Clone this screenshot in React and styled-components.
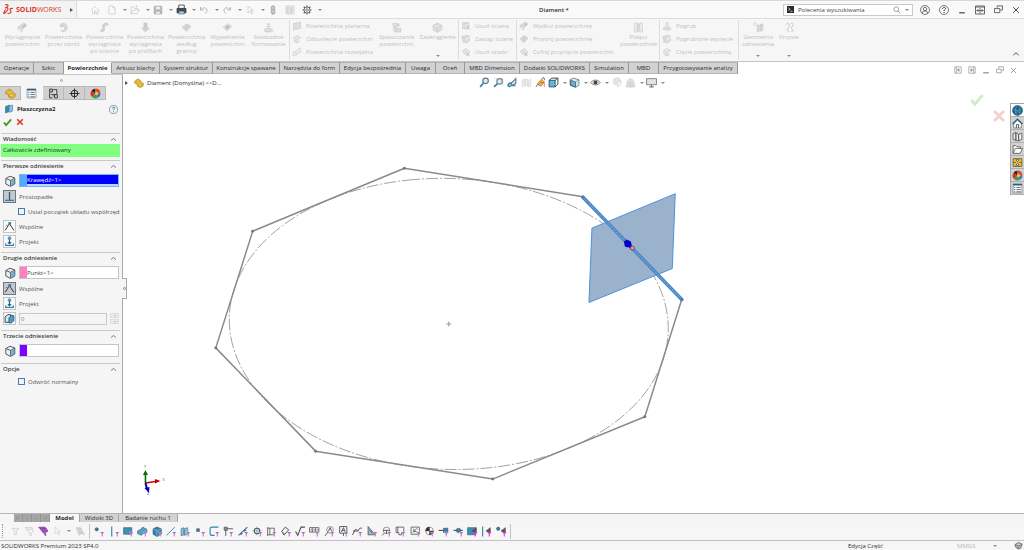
import React from "react";
import styled, { createGlobalStyle } from "styled-components";

const Global = createGlobalStyle`
  *, *::before, *::after { box-sizing: border-box; }
  body { margin: 0; background: #f6f6f6; color: #2b2b2b; font: 6px/8px "Open Sans", "Noto Sans", sans-serif; }
  button, input { font: inherit; color: inherit; margin: 0; padding: 0; border: 0; background: none; }
  button { display: flex; align-items: center; justify-content: center; }
  svg { display: block; flex: none; }
`;

/* ---------- icons (20 x 20 grid) ---------- */
const FILTER = "#a44fc0";
const BLUE = "#2f81ab";
const DARK = "#4c4c4c";

const G = {
  home: <path d="M2 11 10 3l8 8M5 10v8h4v-6h3v6h4v-8" />,
  page: <path d="M4 2h8l4 4v12H4zM12 2v4h4" />,
  open: <path d="M2 17V4h5l2 3h7v3M2 17l4-7h13l-4 7zM13 5V1m-2 2 2-2 2 2" />,
  save: <><path d="M2 2h16v16H2z" fill="currentColor" /><path d="M5 3h10v6H5zM6 13h8v5H6z" fill="#eee" /></>,
  print: <><path d="M5 8V2h10v6" fill="#fff" stroke="#444" strokeWidth="1.600" /><path d="M2 8h16v8H2z" fill="#35506a" stroke="#333" strokeWidth="1.600" /><path d="M5 13h10v5H5z" fill="#a9d4ea" stroke="#444" /></>,
  undo: <path d="M3 4v6h6M3 10c4-6 14-6 13 2-.3 2-2 4-4 5" strokeWidth="2" />,
  redo: <path d="M17 4v6h-6M17 10C13 4 3 4 4 12c.3 2 2 4 4 5" strokeWidth="2" />,
  cursor: <path d="M6 2v14l4-4 3 6 2-1-3-6h5z" />,
  traffic: <><rect x="6" y="1" width="8" height="18" rx="4" fill="currentColor" /><circle cx="10" cy="6" r="2" fill="#e5e5e5" /><circle cx="10" cy="13" r="2" fill="#e5e5e5" /></>,
  list: <><path d="M2 2h16v16H2zM8 2v16" /><path d="M3 6h4M3 10h4M3 14h4M10 6h6M10 10h6M10 14h6" strokeWidth="2" /></>,
  gear: <><circle cx="10" cy="10" r="6" strokeWidth="1.600" /><circle cx="10" cy="10" r="2.500" strokeWidth="1.400" /><path d="M10 1v3M10 16v3M1 10h3M16 10h3M3.500 3.500l2 2M14.500 14.500l2 2M3.500 16.500l2-2M14.500 5.500l2-2" strokeWidth="2.400" /></>,
  search: <><circle cx="8" cy="8" r="6" strokeWidth="1.600" /><path d="m12 12 6 6" strokeWidth="2" /></>,
  terminal: <><path d="M0 0h20v20H0z" fill="#2b2b2b" stroke="none" /><path d="m4 5 5 4-5 4M10 15h6" stroke="#fff" strokeWidth="2" /></>,
  user: <><circle cx="10" cy="10" r="9" strokeWidth="1.400" /><circle cx="10" cy="8" r="3.500" strokeWidth="1.400" /><path d="M5 17v-3l3-2h4l3 2v3" strokeWidth="1.400" /></>,
  help: <><circle cx="10" cy="10" r="9" strokeWidth="1.400" /><path d="M7 8c0-4 6-4 6-1 0 2-3 2-3 5M10 14v2" strokeWidth="2" /></>,
  min: <path d="M3 17h14" strokeWidth="3" />,
  grid: <><path d="M1 2h18v16H1zM1 4h18" strokeWidth="1.600" /><path d="M10 6v12M3 11h14M7 8l-3 3 3 3M13 8l3 3-3 3" strokeWidth="1.400" /></>,
  restore: <><path d="M7 6V2h12v9h-5" strokeWidth="1.800" /><path d="M1 8h12v9H1z" strokeWidth="1.800" /></>,
  close: <path d="m3 3 14 14M17 3 3 17" strokeWidth="2.400" />,
  up: <path d="m3 13 7-6 7 6" strokeWidth="2.200" />,
  dockL: <><path d="M2 2h16v16H2zM6 2v16" strokeWidth="1.600" /><path d="m13 6-5 4 5 4z" fill="currentColor" /></>,
  dockR: <><path d="M2 2h16v16H2zM14 2v16" strokeWidth="1.600" /><path d="m7 6 5 4-5 4z" fill="currentColor" /></>,
  extrude: <><path d="m2 9 10-7 6 4-9 8z" fill="#dcdcdc" /><path d="m2 9 7 5v4l-7-4zM12 5l3-3" /><path d="m10 10 6-5" strokeWidth="3" /></>,
  revolve: <path d="M4 5c5-5 13-2 13 5s-8 9-12 6c5 0 8-2 7-6-1-3-5-3-7-1L4 5zM5 9l5-1" fill="#d8d8d8" />,
  sweep: <path d="M4 18c4 0 7-2 6-6s0-6 7-7l-2-3c-8 0-10 4-8 9 1 3-1 3-4 3z" fill="#d2d2d2" />,
  loft: <path d="M7 2h6v9h4l-7 7-7-7h4zM10 3v9" fill="#d2d2d2" />,
  bound: <path d="m2 10 8-7 8 5-8 9zM5 8l8 6M8 5l8 6M6 14l8-9" fill="#dadada" />,
  fill: <><path d="m2 9 9-6 7 5-9 8z" fill="#e4e4e4" /><path d="m6 9 5-3 3 3-5 4z" fill="#bbb" /></>,
  free: <><path d="M2 16c1-6 15-6 16 0-4 3-12 3-16 0zM10 11V2M7 5l3-3 3 3" fill="#ddd" /><path d="M6 8h8" /></>,
  planar: <path d="m3 5 14-3v13L3 18z" fill="#dedede" />,
  offset: <path d="m2 8 8-5 8 4-8 5zM2 12l8 4 6-3M5 14c0 3 5 4 9 3" fill="#e6e6e6" />,
  ruled: <path d="m2 10 6-2v8l-6 2zM8 8c3 0 2-6 9-6v9c-5 0-5 4-9 5" fill="#ececec" />,
  flatten: <path d="M2 3h12v5H8v4h10v6H6M4 8l10 7M3 13l6 4M9 3l7 3" fill="#e0e0e0" />,
  fillet: <path d="m2 6 8-4 8 4v8l-8 5-8-5zM2 6l8 4 8-4M10 10v8M6 4l8 4" fill="#e0e0e0" />,
  del: <><path d="M3 3h12v12H3zM6 6l9-2M6 6v10" fill="#e8e8e8" /><path d="m10 9 7 8M17 9l-7 8" strokeWidth="2" /></>,
  repl: <path d="m2 5 10-3 6 3-10 4zM2 5v5l6 3V9M4 12l-1 4 8 2 6-4V9l-7 4" fill="#e0e0e0" />,
  hole: <><path d="m2 9 8-6 8 6-8 7z" fill="#eee" /><circle cx="9" cy="9" r="3" /><path d="m11 11 6 7M17 11l-6 7" strokeWidth="2" /></>,
  knit: <path d="M3 2h5v16H3zM12 2h5v16h-5zM8 5h4M8 9h4M8 13h4M9 2c1 5-1 8 1 16" fill="#ededed" />,
  refg: <><circle cx="4" cy="4" r="2.500" /><path d="m8 6 3-1v12l-3 1zM13 5l5-2v12l-5 2z" fill="#ddd" /><path d="M15 4v12" /></>,
  curve: <path d="M3 5c5-5 9 0 6 4s-5 8 0 8M12 3c5-2 6 2 3 5s-1 5 1 6-1 4-3 3" strokeWidth="1.600" />,
  part: <><path d="m1 7 6-5 5 2 2 4 5 3-1 5-5 3-6-2-1-5-5-2z" fill="#eebd32" stroke="#a9790f" strokeWidth="1.200" /><path d="m6 6 4 1 1 4 4 2-2 3-4-1 1-4-5-2z" fill="#ffe38a" stroke="#b98718" /></>,
  pm: <><path d="M2 2h16v16H2z" fill="#fff" stroke="#44657e" /><path d="M2 3h16" stroke="#305c80" strokeWidth="3" /><path d="M8 8h8M8 12h8M8 16h8" strokeWidth="1.600" stroke="#555" /><path d="M4 8h2M4 12h2M4 16h2" strokeWidth="2" stroke={BLUE} /></>,
  config: <><path d="M3 2h5v5H3zM3 8v10h5M6 12h5v4" strokeWidth="1.600" /><path d="M10 3h6v7l-3 2M12 12h5v6h-5z" fill="#ddd" strokeWidth="1.600" /></>,
  target: <><circle cx="10" cy="10" r="6" strokeWidth="1.800" /><path d="M10 1v18M1 10h18" strokeWidth="1.800" /></>,
  ball: <g stroke="none"><circle cx="10" cy="10" r="9" fill="#eee" /><path d="M10 10V1a9 9 0 0 0-8 5z" fill="#2b2b2b" /><path d="M10 10 2 6a9 9 0 0 0 2 11z" fill="#d93025" /><path d="m10 10-6 7a9 9 0 0 0 10 1z" fill="#39a14a" /><path d="m10 10 4 8a9 9 0 0 0 5-9z" fill="#3576c7" /><path d="m10 10 9-1a9 9 0 0 0-9-8z" fill="#e8462f" /><circle cx="12" cy="10" r="3" fill="#f4c430" /></g>,
  plane: <><path d="m3 5 8-3v13l-8 3z" fill="#3b86b4" stroke="#245a7d" /><path d="m11 4 6-2v12l-6 3" fill="#8ec0dc" stroke="#2a6286" /></>,
  check: <path d="m2 10 5 6L18 3" strokeWidth="4" />,
  cross: <path d="m3 3 14 14M17 3 3 17" strokeWidth="4" />,
  box: <><path d="m3 6 7-4 8 3v10l-7 4-8-4z" fill="#e9f1f5" stroke="#555" strokeWidth="1.600" /><path d="m3 6 8 3 7-4M11 9v9" stroke="#555" strokeWidth="1.600" /><path d="m13 10 4-2v7l-4 2z" fill="#7fbfdc" stroke={BLUE} /></>,
  perp: <><path d="M2 17h16" stroke={BLUE} strokeWidth="2.400" /><path d="M10 2v14" stroke="#255f82" strokeWidth="2.400" /></>,
  coin: <><path d="m2 17 8-12 8 12" stroke="#333" strokeWidth="1.800" /><path d="M3 8h6" stroke="#777" strokeWidth="1.400" /><path d="M8 4h5" stroke={BLUE} strokeWidth="4" /></>,
  proj: <><circle cx="10" cy="4" r="2.500" fill="#6cb4d6" stroke={BLUE} strokeWidth="1.600" /><path d="M10 6v8m-3-3 3 3 3-3" stroke="#285d80" strokeWidth="2" /><path d="M3 13v4h14v-4" stroke={BLUE} strokeWidth="2" /></>,
  dist: <><path d="M2 7 7 3h5v11l-4 3H2z" fill="#d9e9f1" stroke="#333" strokeWidth="1.600" /><path d="m9 9 5-5 4 1v9l-5 4H9z" fill="#4c9cc4" stroke="#24597b" strokeWidth="1.600" /></>,
  zoomFit: <><circle cx="12" cy="7" r="5" fill="#dcecf4" stroke="#5b7686" strokeWidth="2" /><path d="m8 11-6 7" stroke={BLUE} strokeWidth="3" /></>,
  zoomArea: <><path d="M2 3h16v13" stroke="#999" strokeDasharray="2 2" /><circle cx="12" cy="8" r="5" fill="#dcecf4" stroke="#6f8490" strokeWidth="2" /><path d="m8 12-6 6" stroke={BLUE} strokeWidth="3" /></>,
  prev: <><path d="m8 11 8-8v9l-9 4zM16 16H7" stroke="#55788a" strokeWidth="2" fill="#e5edf1" /><path d="M9 11c-8-1-9 7-3 6" stroke={BLUE} strokeWidth="3" /></>,
  section: <path d="m2 6 5-2v12l-5 2zM8 4h4v12H8zM13 6l5-2v12l-5 2z" stroke="#cfcfcf" fill="#eee" />,
  edit: <><path d="m4 12 8-8 5 5-6 8z" fill="#f0b13c" stroke="#8d6a3a" /><path d="M2 18c1-5 4-6 7-2M12 3l4-2 2 5" fill="#dfe5e8" stroke="#58707e" strokeWidth="1.600" /><path d="M9 10h8v8" stroke="#c0392b" /></>,
  views: <><path d="M2 6h11v12H2z" fill="#66b4d8" stroke="#25506b" strokeWidth="1.600" /><path d="m2 6 5-4h11v11l-5 5M13 6l5-4" stroke="#333" strokeWidth="1.600" /></>,
  cube: <><path d="m2 5 6-3 10 3v10l-6 4-10-4z" fill="#dceef6" stroke="#586f7c" strokeWidth="1.400" /><path d="M3 6l9 3v9l-9-3z" fill="#65b3d8" /><path d="m12 9 6-4" stroke="#586f7c" /></>,
  eye: <><path d="M1 10c4-6 14-6 18 0-4 6-14 6-18 0z" fill="#ddd" stroke="#777" strokeWidth="1.400" /><circle cx="10" cy="10" r="3.500" fill="#444" stroke="none" /></>,
  appear: <><circle cx="9" cy="8" r="6.500" fill="#e6e6e6" stroke="#ccc" /><path d="m9 9 8-2-2 8-5 3z" fill="#f3f3f3" stroke="#ccc" /></>,
  scene: <><path d="M2 18c1-9 3-15 8-15s7 6 8 15z" fill="#e4e4e4" stroke="#c4c4c4" /><path d="M6 10h8v8H6zM10 6v12M6 14h8" stroke="#c4c4c4" /></>,
  monitor: <><path d="M1 3h18v11H1z" fill="#e4e4e4" stroke="#777" strokeWidth="1.600" /><path d="M10 14v4M6 18h8" stroke="#777" strokeWidth="2" /></>,
  globe: <><circle cx="10" cy="10" r="9" fill="#1b6288" stroke="#0f4564" /><path d="M3 8c5 3 9 3 14 0M5 14c3-2 7-2 10 0M8 2c-2 5-2 11 0 16M13 2c2 5 2 11 0 16" stroke="#74b5d6" /></>,
  homeB: <><path d="M3 10v8h14v-8l-7-6z" fill="#fff" stroke="#444" /><path d="m1 11 9-9 9 9" stroke="#245f85" strokeWidth="2.400" /><path d="M8 18v-6h4v6" stroke="#444" strokeWidth="1.600" /></>,
  lib: <path d="m2 5 5-2v14l-5-2zM7 3l5 3v12l-5-1zM12 6l6-2v11l-6 3z" fill="#eee" stroke="#555" strokeWidth="1.500" />,
  folder: <path d="M2 17V3h5l2 2h6v3M2 17l4-9h13l-4 9z" fill="#fff" stroke="#555" strokeWidth="1.500" />,
  palette: <><path d="M2 3h16v14H2z" fill="#f0c03a" stroke="#6b5624" strokeWidth="1.500" /><path d="M7 5h6l-3 4zM7 15h6l-3-4zM2 10h5M13 10h5" fill="#fff" stroke="#555" strokeWidth="1.500" /></>,
};

const Glyph = styled.svg.attrs({ viewBox: "0 0 20 20", fill: "none", stroke: "currentColor", "aria-hidden": true })`
  width: ${(p) => p.$s || 10}px;
  height: ${(p) => p.$s || 10}px;
  color: ${(p) => p.$c || "inherit"};
`;
const Icon = ({ n, s, c }) => <Glyph $s={s} $c={c}>{G[n]}</Glyph>;

const Caret = styled.span`
  display: block;
  width: 0;
  height: 0;
  border: 2px solid transparent;
  border-top-color: ${(p) => p.$c || "#8a8a8a"};
  border-bottom: 0;
`;

/* ---------- title bar ---------- */
const Page = styled.div`
  min-height: 100vh;
  display: flex;
  flex-direction: column;
`;
const TitleBar = styled.header`
  display: flex;
  align-items: center;
  height: 19px;
  padding-right: 4px;
  background: #f9f9f9;
  border-top: 1px solid #d8d8d8;
  border-bottom: 1px solid #dcdcdc;
`;
const Brand = styled.div`
  display: flex;
  align-items: center;
  gap: 2px;
  width: 77px;
  height: 100%;
  padding-left: 3px;
  background: #f3f3f3;
  border-right: 1px solid #dcdcdc;
  color: #d9352b;
  font-size: 7px;
`;
const Expand = styled.span`
  margin-left: auto;
  margin-right: 3px;
  border: 2px solid transparent;
  border-left: 3px solid #555;
  border-right: 0;
`;
const QuickBar = styled.nav`
  display: flex;
  align-items: center;
  padding-left: 13px;
  color: #b4b4b4;
`;
const QuickButton = styled.button`
  width: ${(p) => (p.$menu ? 23 : 17)}px;
  justify-content: ${(p) => (p.$menu ? "space-between" : "flex-start")};
  padding-right: ${(p) => (p.$menu ? 3 : 0)}px;
  color: ${(p) => p.$c || "inherit"};
`;
const DocTitle = styled.h1`
  flex: 1;
  margin: 0;
  text-align: center;
  font-size: 6px;
  font-weight: 600;
`;
const Search = styled.label`
  display: flex;
  align-items: center;
  gap: 4px;
  width: 130px;
  height: 12px;
  padding: 0 3px;
  background: #fff;
  border: 1px solid #c9c9c9;
  color: #777;
`;
const SearchInput = styled.input`
  flex: 1;
  min-width: 0;
  outline: 0;
  &::placeholder { color: #444; opacity: 1; }
`;
const WindowButtons = styled.div`
  display: flex;
  align-items: center;
  gap: 9px;
  padding-left: 7px;
  color: #444;
`;

/* ---------- ribbon ---------- */
const Ribbon = styled.div`
  display: flex;
  height: 43px;
  background: #f6f6f6;
  color: #c0c0c0;
  border-bottom: 1px solid #c4c4c4;
`;
const RibbonGroup = styled.div`
  display: flex;
  padding: 2px 0 0 ${(p) => p.$pad || 0}px;
  height: 40px;
  margin-top: 1px;
  border-right: ${(p) => (p.$last ? 0 : 1)}px solid #dddddd;
`;
const BigButton = styled.button`
  width: ${(p) => p.$w || 41}px;
  height: 35px;
  flex-direction: column;
  justify-content: flex-start;
  gap: 1px;
  line-height: 7px;
  text-align: center;
  white-space: pre-line;
`;
const BigCaret = styled(Caret)`
  margin-top: auto;
`;
const SmallColumn = styled.div`
  display: flex;
  flex-direction: column;
  width: ${(p) => p.$w}px;
  padding-left: 2px;
`;
const SmallButton = styled.button`
  height: 14px;
  margin-top: -2px;
  margin-bottom: 2px;
  justify-content: flex-start;
  gap: 4px;
  white-space: nowrap;
`;
const Collapse = styled.button`
  margin-left: auto;
  padding: 0 4px 3px 0;
  align-items: flex-end;
  color: #444;
`;

const TabRow = styled.div`
  display: flex;
  align-items: stretch;
  height: 12px;
  background: #fff;
`;
const Tab = styled.button`
  width: ${(p) => p.$w}px;
  flex: none;
  background: ${(p) => (p.$on ? "#fbfbfb" : "#d2d2d2")};
  border-right: 1px solid #979797;
  border-top: 1px solid ${(p) => (p.$on ? "#fbfbfb" : "#b5b5b5")};
  border-bottom: 1px solid ${(p) => (p.$on ? "#fbfbfb" : "#b5b5b5")};
  font-weight: ${(p) => (p.$on ? 700 : 400)};
  white-space: nowrap;
`;
const DocButtons = styled.div`
  margin-left: auto;
  display: flex;
  gap: 6px;
  padding: 4px 7px 0 0;
  color: #8c8c8c;
`;

/* ---------- work area ---------- */
const Work = styled.main`
  flex: 1;
  display: flex;
  min-height: 439px;
  background: #fff;
`;
const Panel = styled.aside`
  position: relative;
  flex: none;
  width: 123px;
  background: #f5f5f5;
  border-right: 1px solid #a8a8a8;
  border-top: 1px solid #c8c8c8;
`;
const Grip = styled.div`
  height: 11px;
  display: flex;
  align-items: center;
  justify-content: center;
  &::after { content: ""; width: 3px; height: 3px; border: 1px solid #999; border-radius: 50%; }
`;
const PanelTabs = styled.div`
  display: flex;
  height: 14px;
`;
const PanelTab = styled.button`
  width: ${(p) => (p.$on ? 22 : 21)}px;
  background: ${(p) => (p.$on ? "#f5f5f5" : "#d0d0d0")};
  border: 1px solid ${(p) => (p.$on ? "#f5f5f5" : "#b9b9b9")};
  border-left-width: 0;
`;
const PanelTitle = styled.h2`
  display: flex;
  align-items: center;
  gap: 3px;
  height: 18px;
  margin: 0;
  padding: 0 4px;
  font-size: 6px;
  font-weight: 700;
`;
const HelpButton = styled.button`
  margin-left: auto;
  color: #46708a;
`;
const Actions = styled.div`
  display: flex;
  align-items: flex-start;
  gap: 4px;
  height: 15px;
  padding: 0 3px;
`;
const SectionBox = styled.section`
  margin: 0 2px 0 1px;
  padding-bottom: ${(p) => (p.$tight ? 3 : 4)}px;
  border-top: 1px solid #c9c9c9;
`;
const SectionTitle = styled.h3`
  display: flex;
  align-items: center;
  justify-content: space-between;
  height: 10px;
  margin: 0;
  padding: 0 3px 0 2px;
  font-size: 6px;
  font-weight: 600;
  color: #3c3c3c;
`;
const Message = styled.p`
  margin: 0;
  height: 13px;
  padding-left: 2px;
  background: #80ff80;
  line-height: 13px;
`;
const Row = styled.div`
  display: flex;
  align-items: ${(p) => (p.$tall ? "flex-end" : "center")};
  gap: 3px;
  height: ${(p) => (p.$tall ? 18 : 15)}px;
  padding: 0 1px ${(p) => (p.$tall ? 2 : 0)}px ${(p) => p.$indent || 2}px;
  color: #555;
  overflow: hidden;
  white-space: nowrap;
`;
const FieldIcon = styled.span`
  width: 13px;
  display: flex;
  justify-content: center;
`;
const Field = styled.div`
  display: flex;
  flex: 1;
  height: 13px;
  background: ${(p) => (p.$active ? "#b7dcff" : "#fff")};
  border: 1px solid ${(p) => (p.$active ? "#7fb4e6" : "#c2c6c9")};
`;
const Swatch = styled.span`
  width: 7px;
  background: ${(p) => p.$c};
`;
const FieldInput = styled.input`
  flex: 1;
  min-width: 0;
  height: ${(p) => (p.$active ? 9 : 11)}px;
  outline: 0;
  color: ${(p) => (p.$active ? "#fff" : "#3c3c3c")};
  background: ${(p) => (p.$active ? "#0000ff" : "#fff")};
`;
const RefButton = styled.button`
  width: 13px;
  height: 13px;
  background: ${(p) => (p.$on ? "#c5c9cc" : "#fafafa")};
  border: 1px solid ${(p) => (p.$on ? "#6c7881" : "#c4c4c4")};
`;
const Check = styled.input.attrs({ type: "checkbox" })`
  appearance: none;
  flex: none;
  width: 7px;
  height: 7px;
  background: #eef4f9;
  border: 1px solid #4a7daa;
`;
const CheckLabel = styled.label`
  display: flex;
  align-items: center;
  gap: 3px;
`;
const Spinner = styled.input`
  flex: 1;
  min-width: 0;
  height: 12px;
  padding-left: 1px;
  background: #f5f5f5;
  border: 1px solid #c9c9c9;
  color: #777;
`;
const Steps = styled.span`
  display: flex;
  flex-direction: column;
  gap: 1px;
`;
const Step = styled.button`
  width: 9px;
  height: 5px;
  background: #eeede6;
  border: 1px solid #deddd5;
  color: #aaa;
`;
const PanelHandle = styled.span`
  position: absolute;
  top: 203px;
  right: -5px;
  width: 5px;
  height: 21px;
  display: flex;
  align-items: center;
  justify-content: center;
  background: #f5f5f5;
  border: 1px solid #a8a8a8;
  border-left: 0;
  &::after { content: ""; width: 3px; height: 3px; border: 1px solid #888; border-radius: 50%; }
`;

const Viewport = styled.div`
  position: relative;
  flex: 1;
  min-width: 0;
`;
const Drawing = styled.svg`
  position: absolute;
  inset: 0;
  width: 100%;
  height: 100%;
`;
const ViewBar = styled.div`
  position: relative;
  display: grid;
  grid-template-columns: 1fr auto 1fr;
  align-items: center;
  padding: 3px 4px 0 2px;
`;
const Tree = styled.div`
  display: flex;
  align-items: center;
  gap: 3px;
`;
const TreeArrow = styled(Expand)`
  margin: 0 3px 0 0;
`;
const ViewTools = styled.div`
  display: flex;
  gap: 3px;
  padding-left: 12px;
`;
const ViewTool = styled.button`
  gap: 4px;
  width: ${(p) => (p.$menu ? 18 : 11)}px;
`;
const Confirm = styled.div`
  position: relative;
  display: flex;
  justify-content: flex-end;
  align-items: flex-start;
  gap: 8px;
  padding: 5px 4px 0 0;
`;
const ConfirmButton = styled.button`
  opacity: 0.25;
  margin-top: ${(p) => (p.$low ? 16 : 0)}px;
`;
const TaskPane = styled.nav`
  flex: none;
  align-self: flex-start;
  width: 14px;
  margin-top: 29px;
  border: 1px solid #a4a4a4;
  border-right: 0;
  border-bottom: 0;
`;
const TaskButton = styled.button`
  width: 13px;
  height: 13px;
  background: ${(p) => (p.$on ? "#fff" : "#d2d2d2")};
  border-bottom: 1px solid #b0b0b0;
`;

/* ---------- bottom ---------- */
const ModelTabs = styled.div`
  display: flex;
  height: 9px;
  padding-left: 14px;
  background: #f5f5f5;
  border-top: 1px solid #b4b4b4;
`;
const ScrollButtons = styled.div`
  display: flex;
  background: #a6a6a6;
`;
const ScrollButton = styled.button`
  width: 9px;
  color: #888;
  border-right: 1px solid #929292;
`;
const ModelTab = styled.button`
  width: ${(p) => p.$w}px;
  background: ${(p) => (p.$on ? "#f8f8f8" : "#d2d2d2")};
  border-right: 1px solid #a6a6a6;
  font-weight: ${(p) => (p.$on ? 700 : 400)};
`;
const FilterBar = styled.div`
  display: flex;
  align-items: center;
  height: 18px;
  padding-left: 2px;
  background: #f6f6f6;
`;
const Handle = styled.span`
  height: 14px;
  border-left: 1px dotted #999;
  margin-right: 5px;
`;
const FilterButton = styled.button`
  width: ${(p) => p.$w || 14}px;
  margin-right: ${(p) => (p.$gap ? 1 : 0)}px;
`;
const Divider = styled.span`
  width: 1px;
  height: 15px;
  margin: 0 2px;
  background: #c4c4c4;
`;
const Status = styled.footer`
  display: flex;
  align-items: center;
  height: 10px;
  padding: 0 1px;
  background: #f6f6f6;
  border-top: 1px solid #c2c2c2;
`;
const Mode = styled.span`
  margin-left: auto;
  width: 109px;
`;
const Units = styled.span`
  display: flex;
  align-items: center;
  justify-content: space-between;
  width: 66px;
  color: #b8b8b8;
`;

/* ---------- data ---------- */
const quick = [
  ["home", "Start", 0], ["page", "Nowy", 1], ["open", "Otwórz", 1], ["save", "Zapisz", 1], ["print", "Drukuj", 1],
  ["undo", "Cofnij", 1], ["redo", "Ponów", 1], ["cursor", "Wybierz", 1], ["traffic", "Przebuduj", 0],
  ["list", "Właściwości pliku", 0], ["gear", "Opcje", 1, "#555"],
];
const bigs = [
  ["extrude", "Wyciągnięcie\npowierzchni"], ["revolve", "Powierzchnia\nprzez obrót"], ["sweep", "Powierzchnia\nwyciągnięta\npo ścieżce"],
  ["loft", "Powierzchnia\nwyciągnięta\npo profilach"], ["bound", "Powierzchnia\nwedług\ngranicy"], ["fill", "Wypełnienie\npowierzchni"], ["free", "Swobodne\nformowanie"],
];
const tabs = [
  ["Operacje", 34], ["Szkic", 30], ["Powierzchnie", 48, 1], ["Arkusz blachy", 48], ["System struktur", 53], ["Konstrukcje spawane", 67],
  ["Narzędzia do form", 60], ["Edycja bezpośrednia", 66], ["Uwaga", 30], ["Oceń", 29], ["MBD Dimension", 55], ["Dodatki SOLIDWORKS", 70],
  ["Simulation", 39], ["MBD", 30], ["Przygotowywanie analizy", 79],
];
const filters = [
  ["wierzchołki", <circle cx="5" cy="6" r="3" fill={BLUE} />],
  ["krawędzie", <path d="M5 1v18" stroke={BLUE} strokeWidth="2" />],
  ["ściany", <path d="M1 3h15v12H1z" fill="#3c8fb8" stroke="#24566f" />],
  ["powierzchnie", <path d="m1 9 6-3 3-4 8 4v6l-6 1-4 4-7-3z" fill="#55a2c6" stroke="#285a74" />],
  ["bryły", <><path d="m2 5 7-3 8 3v10l-8 4-7-4z" fill="#3581a8" stroke="#204b62" /><path d="m2 5 7 4 8-4M9 9v9" stroke="#b0dcf0" /></>],
  ["osie", <path d="M1 17 16 2" stroke={BLUE} strokeWidth="1.600" />],
  ["płaszczyzny", <path d="m2 5 5-2v13l-5 2zM8 5l6-2v12l-6 2z" fill="#8cc0d9" stroke="#315d74" />],
  ["punkty szkicu", <path d="M3 5h5v5H3z" fill={BLUE} />],
  ["szkice", <path d="M17 2H5Q2 2 2 5v9q0 3 3 3h5" stroke={BLUE} strokeWidth="2" />],
  ["segmenty szkicu", <><path d="M5 5h13M5 5v13" strokeWidth="1.600" /><path d="M2 2h6v6H2z" fill="#888" /></>],
  ["linie środkowe", <path d="M1 17 17 2M5 16l3-3M11 10l4-3" stroke="#426f87" strokeWidth="2" />],
  ["znaczniki środka", <><circle cx="9" cy="9" r="5" strokeWidth="2" /><path d="M9 1v16M1 9h16" stroke={BLUE} /></>],
  ["wymiary", <path d="M3 2v16M3 4h12v12H3M7 4v12" strokeWidth="1.400" />],
  ["odniesienia", <path d="m1 10 7-8 6 5-7 8zM3 13l3 4" strokeWidth="1.800" />],
  ["wykończenie", <path d="m1 10 4 7L11 2h7" strokeWidth="2" />],
  ["tolerancje", <path d="M1 3h17v8H1zM6 3v8M12 3v8M3 7h2M8 7h3M14 7h3" strokeWidth="1.400" />],
  ["uwagi", <><circle cx="11" cy="7" r="6" /><path d="m2 18 5-7M8 10l3-7 3 7" strokeWidth="1.600" /></>],
  ["bazy", <path d="M3 1h13v12H3zM10 13v5M6 11l4-8 3 8M7 8h5" strokeWidth="1.600" />],
  ["spoiny", <path d="m1 16 4-8c3-5 5 3 7-1s4-3 6-3M2 9h10" strokeWidth="1.800" />],
  ["bloki", <path d="M2 1v15h13zM5 8l5 5" fill="#9cbccb" strokeWidth="1.400" />],
  ["cele bazy", <><circle cx="10" cy="8" r="6" /><path d="M4 8h12M10 8v6M2 17l4-4" strokeWidth="1.600" /></>],
  ["gwinty", <path d="M2 2h14v10h-4v4H7v-4H2zM5 2v10" strokeWidth="1.400" />],
  ["balony", <path d="M2 2h15v13H2zM5 12l8-8M7 5v5h5" strokeWidth="1.400" />],
  ["środki masy", <><circle cx="10" cy="9" r="7" fill="#fff" /><path d="M10 9V2a7 7 0 0 0-7 7zM10 9v7a7 7 0 0 0 7-7z" fill="#333" /></>],
  ["punkty połączeń", <><path d="M1 8h9" strokeWidth="2" /><path d="M10 4h8v8h-8z" fill={BLUE} /></>],
  ["punkty trasy", <><path d="M1 8h17" strokeWidth="2" /><circle cx="10" cy="8" r="4" fill={BLUE} /></>],
];
const picks = [
  ["ściany siatki", <path d="M1 3h15v13H1z" fill="#3c8fb8" stroke="#24566f" />],
  ["krawędzie siatki", <path d="M3 1v18" stroke={BLUE} strokeWidth="2" />],
  ["wierzchołki siatki", <circle cx="4" cy="5" r="3" fill={BLUE} />],
];

function Section({ title, tight, children }) {
  return (
    <SectionBox $tight={tight}>
      <SectionTitle>{title}<Icon n="up" s={7} c="#555" /></SectionTitle>
      {children}
    </SectionBox>
  );
}

function Reference({ label, color, value, active }) {
  return (
    <Row $tall>
      <FieldIcon><Icon n="box" s={12} /></FieldIcon>
      <Field $active={active}>
        <Swatch $c={color} />
        <FieldInput aria-label={label} defaultValue={value} $active={active} />
      </Field>
    </Row>
  );
}

function Relation({ icon, label, on }) {
  return <Row><RefButton $on={on} aria-label={label}><Icon n={icon} s={11} /></RefButton><span>{label}</span></Row>;
}

function SmallGroup({ w, items }) {
  return (
    <SmallColumn $w={w}>
      {items.map(([icon, label]) => <SmallButton key={label} disabled><Icon n={icon} />{label}</SmallButton>)}
    </SmallColumn>
  );
}

function Big({ icon, label, w, menu }) {
  return (
    <BigButton $w={w} disabled>
      <Icon n={icon} s={11} />
      <span>{label}</span>
      {menu && <BigCaret />}
    </BigButton>
  );
}

function ModelDrawing() {
  return (
    <Drawing viewBox="123 74 887 440" fill="none" role="img" aria-label="Diament">
      <circle r="0.924" transform="matrix(-44 -156 234 -24.5 448.5 324.500)" stroke="#a2a2a2" strokeDasharray="12 2 2 2" vectorEffect="non-scaling-stroke" />
      <path d="m583 197-179-28.500L252 231.500 215 348.500 315 452l177.500 28 152.500-62.500L682 300" stroke="#8a8a8a" strokeWidth="1.500" strokeLinejoin="round" />
      {[[404, 168.5], [252, 231.5], [215, 348.5], [315, 452], [492.5, 480], [645, 417.5]].map(([x, y]) => <circle key={x} cx={x} cy={y} r="1.500" fill="#777" />)}
      <path d="M446 324.500h5M448.500 322v5" stroke="#999" />
      <path d="m592 228.500 83.500-34.500-3 75L589 303z" fill="#9ab2cc" stroke="#4b93dc" />
      <path d="m583 197.500 99 102.500" stroke="#3f8ad6" strokeWidth="3.600" strokeLinecap="round" />
      <path d="m583 197.500 99 102.500" stroke="#8298ae" strokeWidth="1.400" strokeDasharray="3 1" />
      <circle cx="583" cy="197.500" r="1.500" fill="#56779b" />
      <circle cx="682" cy="300" r="1.500" fill="#56779b" />
      <path d="m624 242 3-2 4 2 1 4-4 2-3-1z" fill="#0000c4" />
      <path d="m627 244 5 5" stroke="#0000c4" strokeWidth="2" />
      <circle cx="632.500" cy="248.500" r="2" fill="#ff86b8" stroke="#7a3347" strokeWidth="0.800" />
      <path d="M144.500 484v-9" stroke="#007000" strokeWidth="1.600" />
      <path d="m142 476 2.500-5 2.500 5z" fill="#007000" />
      <path d="m144.500 484 10-1.500" stroke="#d00000" strokeWidth="1.600" />
      <path d="m154 480 5.500 2-5.500 2.500z" fill="#c00000" />
      <path d="m144.500 484 1.500 6" stroke="#0000b8" strokeWidth="2" />
      <path d="m143.500 489 5-1-.5 6z" fill="#0000b8" />
      <text x="143" y="469" fontSize="4" fill="#2e8b2e">Y</text>
      <text x="161.500" y="482" fontSize="4" fill="#d33">X</text>
      <text x="146" y="496" fontSize="4" fill="#33c">Z</text>
    </Drawing>
  );
}

export default function App() {
  return (
    <Page>
      <Global />
      <TitleBar>
        <Brand>
          <svg width="11" height="12" viewBox="0 0 22 24" fill="none" stroke="#d9352b" strokeWidth="2.200">
            <path d="M4 2c6-2 8 1 4 4L4 8c6-2 8 1 3 7-2 3-5 4-6 4l4-8M20 9c-5-1-7 1-5 4s2 6-6 6" />
          </svg>
          <span><b>SOLID</b>WORKS</span>
          <Expand />
        </Brand>
        <QuickBar>
          {quick.map(([n, label, menu, c]) => (
            <QuickButton key={n} aria-label={label} $menu={menu} $c={c}><Icon n={n} s={n === "print" ? 11 : 10} />{menu ? <Caret /> : null}</QuickButton>
          ))}
        </QuickBar>
        <DocTitle>Diament *</DocTitle>
        <Search>
          <Icon n="terminal" s={7} />
          <SearchInput placeholder="Polecenia wyszukiwania" aria-label="Polecenia wyszukiwania" />
          <Icon n="search" s={8} />
          <Caret />
        </Search>
        <WindowButtons>
          <button aria-label="Użytkownik"><Icon n="user" /></button>
          <button aria-label="Pomoc"><Icon n="help" /></button>
          <button aria-label="Minimalizuj"><Icon n="min" s={8} /></button>
          <button aria-label="Rozmieść"><Icon n="grid" s={10} /></button>
          <button aria-label="Przywróć"><Icon n="restore" s={9} /></button>
          <button aria-label="Zamknij"><Icon n="close" s={8} /></button>
        </WindowButtons>
      </TitleBar>

      <Ribbon>
        <RibbonGroup $pad={2}>
          {bigs.map(([n, label]) => <Big key={n} icon={n} label={label} />)}
        </RibbonGroup>
        <RibbonGroup>
          <SmallGroup w={86} items={[["planar", "Powierzchnia planarna"], ["offset", "Odsunięcie powierzchni"], ["ruled", "Powierzchnia rozwijalna"]]} />
          <Big icon="flatten" label={"Spłaszczanie\npowierzchni"} />
          <Big icon="fillet" label="Zaokrąglenie" menu />
        </RibbonGroup>
        <RibbonGroup>
          <SmallGroup w={57} items={[["del", "Usuń ścianę"], ["repl", "Zastąp ścianę"], ["hole", "Usuń otwór"]]} />
        </RibbonGroup>
        <RibbonGroup>
          <SmallGroup w={101} items={[["extrude", "Wydłuż powierzchnię"], ["bound", "Przytnij powierzchnię"], ["hole", "Cofnij przycięcie powierzchni"]]} />
          <Big icon="knit" label={"Połącz\npowierzchnie"} />
        </RibbonGroup>
        <RibbonGroup>
          <SmallGroup w={78} items={[["free", "Pogrub"], ["repl", "Pogrubione wycięcie"], ["offset", "Cięcie powierzchnią"]]} />
        </RibbonGroup>
        <RibbonGroup $last>
          <Big icon="refg" label={"Geometria\nodniesienia"} w={38} menu />
          <Big icon="curve" label="Krzywe" w={24} menu />
        </RibbonGroup>
        <Collapse aria-label="Zwiń wstążkę"><Icon n="up" s={8} /></Collapse>
      </Ribbon>

      <TabRow>
        {tabs.map(([label, w, on]) => <Tab key={label} $w={w} $on={on}>{label}</Tab>)}
        <DocButtons>
          <button aria-label="Dokuj w lewo"><Icon n="dockL" s={8} /></button>
          <button aria-label="Dokuj w prawo"><Icon n="dockR" s={8} /></button>
          <button aria-label="Minimalizuj dokument"><Icon n="min" s={8} /></button>
          <button aria-label="Przywróć dokument"><Icon n="restore" s={8} /></button>
          <button aria-label="Zamknij dokument"><Icon n="close" s={7} /></button>
        </DocButtons>
      </TabRow>

      <Work>
        <Panel>
          <Grip />
          <PanelTabs>
            {["part", "pm", "config", "target", "ball"].map((n) => <PanelTab key={n} $on={n === "pm"} aria-label={n}><Icon n={n} s={11} /></PanelTab>)}
          </PanelTabs>
          <PanelTitle>
            <Icon n="plane" />Płaszczyzna2
            <HelpButton aria-label="Pomoc"><Icon n="help" s={9} /></HelpButton>
          </PanelTitle>
          <Actions>
            <button aria-label="OK"><Icon n="check" s={9} c="#3f9b1c" /></button>
            <button aria-label="Anuluj"><Icon n="cross" s={8} c="#e03a22" /></button>
          </Actions>
          <Section title="Wiadomość" tight>
            <Message>Całkowicie zdefiniowany</Message>
          </Section>
          <Section title="Pierwsze odniesienie" tight>
            <Reference label="Pierwsze odniesienie" color="#55aaff" value="Krawędź<1>" active />
            <Relation icon="perp" label="Prostopadłe" on />
            <Row $indent={17}><CheckLabel><Check />Ustal początek układu współrzędnych</CheckLabel></Row>
            <Relation icon="coin" label="Wspólne" />
            <Relation icon="proj" label="Projekt" />
          </Section>
          <Section title="Drugie odniesienie">
            <Reference label="Drugie odniesienie" color="#ff80c0" value="Punkt<1>" />
            <Relation icon="coin" label="Wspólne" on />
            <Relation icon="proj" label="Projekt" />
            <Row>
              <RefButton aria-label="Odległość"><Icon n="dist" s={11} /></RefButton>
              <Spinner aria-label="Liczba" defaultValue="0" disabled />
              <Steps><Step aria-label="Więcej"><Caret $c="#ccc" /></Step><Step aria-label="Mniej"><Caret $c="#ccc" /></Step></Steps>
            </Row>
          </Section>
          <Section title="Trzecie odniesienie">
            <Reference label="Trzecie odniesienie" color="#8000ff" value="" />
          </Section>
          <Section title="Opcje">
            <Row $indent={17}><CheckLabel><Check />Odwróć normalny</CheckLabel></Row>
          </Section>
          <PanelHandle />
        </Panel>

        <Viewport>
          <ModelDrawing />
          <ViewBar>
            <Tree><TreeArrow /><Icon n="part" /><span>Diament (Domyślna) &lt;&lt;D...</span></Tree>
            <ViewTools>
              {[["zoomFit"], ["zoomArea"], ["prev"], ["section"], ["edit"], ["views", 1], ["cube", 1], ["eye", 1], ["appear"], ["scene", 1], ["monitor", 1]].map(([n, menu]) => (
                <ViewTool key={n} $menu={menu} aria-label={n}><Icon n={n} s={11} />{menu && <Caret />}</ViewTool>
              ))}
            </ViewTools>
          </ViewBar>
          <Confirm>
            <ConfirmButton aria-label="Zatwierdź"><Icon n="check" s={14} c="#4fae32" /></ConfirmButton>
            <ConfirmButton $low aria-label="Odrzuć"><Icon n="cross" s={14} c="#e04438" /></ConfirmButton>
          </Confirm>
        </Viewport>

        <TaskPane>
          {["globe", "homeB", "lib", "folder", "palette", "ball", "pm"].map((n, i) => <TaskButton key={n} $on={i === 0} aria-label={n}><Icon n={n} s={11} /></TaskButton>)}
        </TaskPane>
      </Work>

      <ModelTabs>
        <ScrollButtons>
          {["M6 4v12M14 5l-5 5 5 5", "m12 5-5 5 5 5", "m8 5 5 5-5 5", "M14 4v12M6 5l5 5-5 5"].map((d) => (
            <ScrollButton key={d} aria-label="Przewiń karty"><Glyph $s={6}><path d={d} strokeWidth="2" /></Glyph></ScrollButton>
          ))}
        </ScrollButtons>
        <ModelTab $w={30} $on>Model</ModelTab>
        <ModelTab $w={39}>Widoki 3D</ModelTab>
        <ModelTab $w={59}>Badanie ruchu 1</ModelTab>
      </ModelTabs>

      <FilterBar>
        <Handle />
        <FilterButton aria-label="Filtr"><Glyph $s={9} $c="#c8c8c8"><path d="M3 3h14l-5 7v7H8v-7z" strokeWidth="1.600" /></Glyph></FilterButton>
        <FilterButton aria-label="Wyczyść filtry"><Glyph $s={11} $c="#c8c8c8"><path d="M2 3h12l3 6-4 4v5l-3-3v-3zM5 6h10" strokeWidth="1.400" /></Glyph></FilterButton>
        <FilterButton aria-label="Wszystkie filtry"><Glyph $s={11} $c="#7a2f96"><path d="M1 2h12l5 7-4 3v6l-4-5z" fill="#b15fd0" /><path d="M4 5h11M7 9h11" strokeWidth="1.600" /></Glyph></FilterButton>
        <FilterButton aria-label="Wybierz"><Icon n="cursor" c="#c4c4c4" /></FilterButton>
        <FilterButton $w={9} aria-label="Rodzaj wyboru"><Caret /></FilterButton>
        <FilterButton aria-label="Odwróć wybór"><Glyph $s={11} $c="#bdbdbd"><path d="M2 3h8l7 12-6-2-3 4z" fill="#d8d8d8" /><path d="M9 3v12l4-4 3 6" /></Glyph></FilterButton>
        <Divider />
        {filters.map(([name, art], i) => (
          <FilterButton key={name} $gap={i % 3 === 0} aria-label={"Filtruj " + name}>
            <Glyph $s={11} $c={DARK}>{art}<path d="M11 11h8l-3 3v5h-2v-5z" fill={FILTER} stroke="#f6f6f6" strokeWidth="0.600" /></Glyph>
          </FilterButton>
        ))}
        {picks.map(([name, art], i) => (
          <FilterButton key={name} $gap={i % 2} aria-label={"Filtruj " + name}>
            <Glyph $s={11} $c={DARK}>{art}<path d="m9 9 8-6v10z" fill="#555" /><path d="M11 11h8l-3 3v5h-2v-5z" fill="#e62bea" stroke="none" /></Glyph>
          </FilterButton>
        ))}
        <Divider />
      </FilterBar>

      <Status>
        <span>SOLIDWORKS Premium 2023 SP4.0</span>
        <Mode>Edycja Część</Mode>
        <Units>MMGS<Caret /><Glyph $s={9} $c="#555"><path d="m2 8 8-5 8 4-3 9-6 2-5-4zM3 9l8 2 6-4M9 12v5" fill="#bbb" strokeWidth="1.600" /></Glyph></Units>
      </Status>
    </Page>
  );
}
